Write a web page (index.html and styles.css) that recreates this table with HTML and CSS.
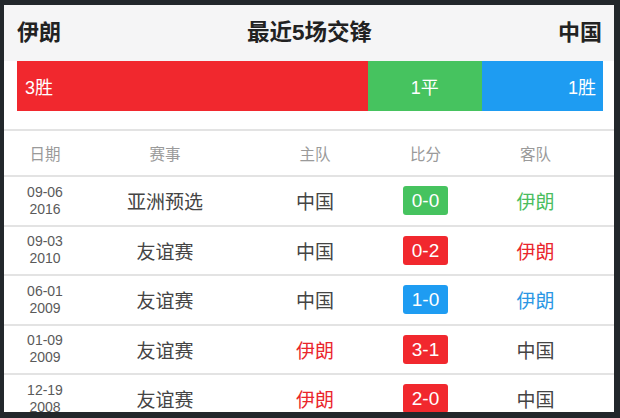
FILE: index.html
```html
<!DOCTYPE html>
<html lang="zh">
<head>
<meta charset="utf-8">
<link rel="stylesheet" href="styles.css">
</head>
<body>
<div class="screen">
  <div class="head">
    <span class="team">伊朗</span>
    <span class="title">最近5场交锋</span>
    <span class="team">中国</span>
  </div>
  <div class="bar-wrap">
    <div class="bar">
      <div class="seg win" style="flex: 3">3胜</div>
      <div class="seg draw" style="flex: 1">1平</div>
      <div class="seg lose" style="flex: 1">1胜</div>
    </div>
  </div>
  <div class="table">
    <div class="row th">
      <div>日期</div><div>赛事</div><div>主队</div><div>比分</div><div>客队</div>
    </div>
    <div class="row">
      <div class="date">09-06<br>2016</div>
      <div class="ev">亚洲预选</div>
      <div class="tm">中国</div>
      <div><span class="score g">0-0</span></div>
      <div class="tm green">伊朗</div>
    </div>
    <div class="row">
      <div class="date">09-03<br>2010</div>
      <div class="ev">友谊赛</div>
      <div class="tm">中国</div>
      <div><span class="score r">0-2</span></div>
      <div class="tm red">伊朗</div>
    </div>
    <div class="row">
      <div class="date">06-01<br>2009</div>
      <div class="ev">友谊赛</div>
      <div class="tm">中国</div>
      <div><span class="score b">1-0</span></div>
      <div class="tm blue">伊朗</div>
    </div>
    <div class="row">
      <div class="date">01-09<br>2009</div>
      <div class="ev">友谊赛</div>
      <div class="tm red">伊朗</div>
      <div><span class="score r">3-1</span></div>
      <div class="tm">中国</div>
    </div>
    <div class="row">
      <div class="date">12-19<br>2008</div>
      <div class="ev">友谊赛</div>
      <div class="tm red">伊朗</div>
      <div><span class="score r">2-0</span></div>
      <div class="tm">中国</div>
    </div>
  </div>
</div>
</body>
</html>
```

FILE: styles.css
```css
html, body {
  margin: 0;
  padding: 0;
}
body {
  background: #22272b;
  width: 620px;
  height: 418px;
  overflow: hidden;
  font-family: "Liberation Sans", "Noto Sans CJK SC", sans-serif;
}
.screen {
  margin: 5px 6px 0 4px;
  height: 407px;
  background: #fff;
  overflow: hidden;
}
.head {
  height: 56px;
  background: #f5f5f6;
  display: flex;
  justify-content: space-between;
  align-items: center;
  padding: 0 12px 0 13px;
  font-size: 22px;
  font-weight: bold;
  color: #222;
  line-height: 1;
}
.title {
  font-size: 22.5px;
}
.bar-wrap {
  padding: 0 11px 18px 13px;
  border-bottom: 2px solid #e3e3e3;
}
.bar {
  display: flex;
  height: 50px;
}
.seg {
  display: flex;
  align-items: center;
  color: #fff;
  font-size: 18px;
}
.seg.win {
  background: #f1282e;
  padding-left: 8px;
}
.seg.draw {
  background: #46c35f;
  justify-content: center;
}
.seg.lose {
  background: #1e9cf2;
  justify-content: flex-end;
  padding-right: 7px;
}
.row {
  display: grid;
  grid-template-columns: 82px 158px 142px 79px 1fr;
  padding-right: 8px;
  align-items: center;
  text-align: center;
  height: 47.5px;
  border-bottom: 2px solid #e3e3e3;
  color: #444;
}
.row.th {
  height: 44px;
  font-size: 15.5px;
  color: #9a9a9a;
}
.date {
  font-size: 14px;
  line-height: 17px;
  color: #5a5a5a;
}
.ev, .tm {
  font-size: 19px;
}
.tm {
  color: #444;
}
.green { color: #4bbd5f; }
.red { color: #ea262d; }
.blue { color: #2b97e4; }
.score {
  display: inline-block;
  width: 45px;
  height: 29px;
  line-height: 29px;
  border-radius: 3px;
  color: #fff;
  font-size: 19px;
}
.score.g { background: #46c35f; }
.score.r { background: #f1282e; }
.score.b { background: #1e9cf2; }
```
